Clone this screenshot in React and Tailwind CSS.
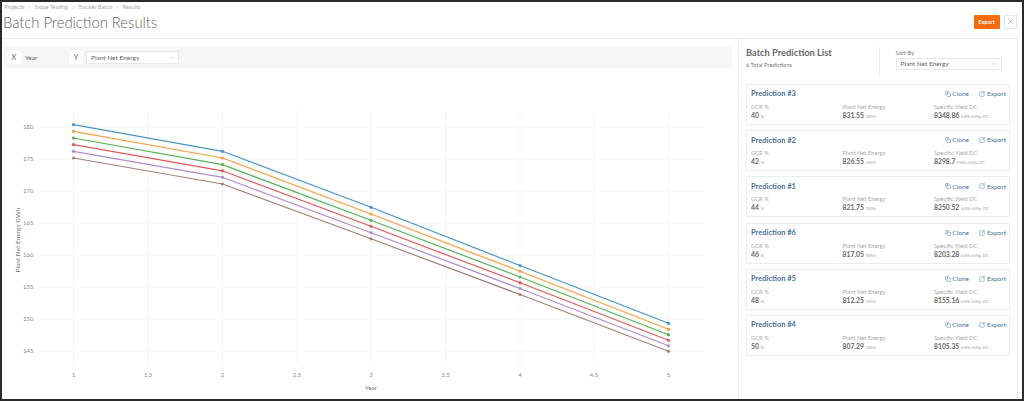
import { ChevronDown, ChevronRight, Copy, SquareArrowOutUpRight, X } from "lucide-react";

const predictions = [
  { name: "Prediction #3", gcr: "40", energy: "831.55", yieldDc: "8348.86" },
  { name: "Prediction #2", gcr: "42", energy: "826.55", yieldDc: "8298.7" },
  { name: "Prediction #1", gcr: "44", energy: "821.75", yieldDc: "8250.52" },
  { name: "Prediction #6", gcr: "46", energy: "817.05", yieldDc: "8203.28" },
  { name: "Prediction #5", gcr: "48", energy: "812.25", yieldDc: "8155.16" },
  { name: "Prediction #4", gcr: "50", energy: "807.29", yieldDc: "8105.35" },
];

const xPos = [73.5, 222.5, 371, 520, 668.5];
const series = [
  { color: "#4a93c6", y: [124.7, 151.3, 207.3, 265.5, 323.3] },
  { color: "#fb9d45", y: [131.3, 158, 214, 271.3, 329.3] },
  { color: "#58b358", y: [138, 164.7, 220.3, 277, 334.7] },
  { color: "#e05a5b", y: [144.7, 170.8, 226.3, 282.7, 340.3] },
  { color: "#b08cd0", y: [151.3, 177.3, 232.7, 288.5, 345.8] },
  { color: "#a98078", y: [158, 184, 238.8, 294.5, 351.3] },
];
const xTicks = [
  ["1", 73.5], ["1.5", 148], ["2", 222.5], ["2.5", 297], ["3", 371],
  ["3.5", 445.5], ["4", 520], ["4.5", 594], ["5", 668.5],
];
const yTicks = [["180", 127], ["175", 159], ["170", 191], ["165", 223], ["160", 255], ["155", 287], ["150", 319], ["145", 351]];

// svg coordinates are page coordinates shifted by the chart's top-left corner
const OX = 2;
const OY = 68;

function Chart() {
  return (
    <svg width="736" height="331" viewBox={`${OX} ${OY} 736 331`} className="block">
      {xTicks.map(([label, x]) => (
        <g key={label}>
          <line x1={x} x2={x} y1="110" y2="366" stroke="#f3f3f3" strokeWidth="0.8" />
          <text x={x} y="377" textAnchor="middle" fontSize="6" fill="#8a8a8a">{label}</text>
        </g>
      ))}
      {yTicks.map(([label, y]) => (
        <g key={label}>
          <line x1="39" x2="704" y1={y} y2={y} stroke="#f3f3f3" strokeWidth="0.8" />
          <text x="33.5" y={y + 2} textAnchor="end" fontSize="6" fill="#8a8a8a">{label}</text>
        </g>
      ))}
      {series.map((s) => (
        <g key={s.color}>
          <polyline
            points={s.y.map((y, i) => `${xPos[i]},${y}`).join(" ")}
            fill="none"
            stroke={s.color}
            strokeWidth="1.2"
          />
          {s.y.map((y, i) => (
            <circle key={i} cx={xPos[i]} cy={y} r="1.6" fill={s.color} />
          ))}
        </g>
      ))}
      <text x="20" y="240" textAnchor="middle" fontSize="6.5" fill="#777" transform="rotate(-90 20 240)">Plant Net Energy GWh</text>
      <text x="371" y="390" textAnchor="middle" fontSize="6.5" fill="#777">Year</text>
    </svg>
  );
}

function Stat({ label, value, unit }) {
  return (
    <div className="w-[91.5px] shrink-0">
      <div className="text-[5.8px] leading-[8px] text-[#a8a8a8]">{label}</div>
      <div className="text-[6.8px] leading-[9px] font-bold text-[#666] whitespace-nowrap">
        {value} <span className="text-[4.5px] font-normal text-[#aaa]">{unit}</span>
      </div>
    </div>
  );
}

function PredictionCard({ item }) {
  return (
    <div className="h-[41px] border border-[#e8edf2] rounded-[1px] pl-[4px] pr-[3px] pt-[4.5px]">
      <div className="flex items-center justify-between h-[9px]">
        <span className="text-[7.5px] font-bold text-[#4a7299]">{item.name}</span>
        <div className="flex items-center gap-[10.5px] text-[6.5px] text-[#4a7299]">
          <span className="flex items-center gap-[1.5px]"><Copy size={6} strokeWidth={1.8} />Clone</span>
          <span className="flex items-center gap-[1.5px]"><SquareArrowOutUpRight size={6} strokeWidth={1.8} />Export</span>
        </div>
      </div>
      <div className="flex mt-[4.5px]">
        <Stat label="GCR %" value={item.gcr} unit="%" />
        <Stat label="Plant Net Energy" value={item.energy} unit="GWh" />
        <Stat label="Specific Yield DC" value={item.yieldDc} unit="kWh/kWp DC" />
      </div>
    </div>
  );
}

export default function App() {
  return (
    <div className="w-[1024px] h-[401px] overflow-hidden bg-white border-2 border-[#2a2a2a] font-['Lato','Open_Sans',sans-serif] text-[#555] flex flex-col">
      {/* header */}
      <div className="h-[36px] shrink-0 flex justify-between pl-[1px] pr-[5px]">
        <div>
          <div className="flex items-center gap-[2.5px] h-[10px] mt-[0.5px] pl-[1px] text-[5.8px] text-[#aaa]">
            <span>Projects</span><ChevronRight size={5} />
            <span>Slope Testing</span><ChevronRight size={5} />
            <span>Tracker Batch</span><ChevronRight size={5} />
            <span>Results</span>
          </div>
          <h1 className="text-[14.8px] leading-[19px] font-light text-[#5f5f5f]">Batch Prediction Results</h1>
        </div>
        <div className="flex items-start gap-[4px] pt-[13px]">
          <button className="w-[26px] h-[13.5px] bg-[#f56b0d] text-white text-[5.5px] font-bold rounded-[1px]">Export</button>
          <button className="w-[13.5px] h-[13.5px] border border-[#e3e8ee] flex items-center justify-center text-[#777]"><X size={9} strokeWidth={1} /></button>
        </div>
      </div>

      {/* body */}
      <div className="flex-1 min-h-0 flex justify-between mr-[4px] border-t border-[#e8e8e8]">
        <div className="w-[736px] shrink-0">
          <div className="h-[21px] mt-[8px] ml-[2px] mr-[6px] bg-[#f6f6f6] flex items-center px-[3px] text-[6.5px] text-[#666]">
            <span className="w-[14px] h-[13px] bg-white flex items-center justify-center text-[7.5px]">X</span>
            <span className="w-[48px] pl-[4px]">Year</span>
            <span className="w-[14px] h-[13px] bg-white flex items-center justify-center text-[7.5px]">Y</span>
            <div className="ml-[3px] w-[93px] h-[13px] bg-white border border-[#e8e8e8] flex items-center justify-between pl-[4px] pr-[3px]">
              <span>Plant Net Energy</span>
              <ChevronDown size={6} className="text-[#aaa]" />
            </div>
          </div>
          <Chart />
        </div>

        <div className="w-[280px] shrink-0 border-l border-r border-[#e8edf2] px-[7px]">
          <div className="flex h-[29px] mt-[8px] mb-[8px]">
            <div className="w-[134px] border-r border-[#eeeeee] h-[29px]">
              <h2 className="text-[9.3px] leading-[12px] font-bold text-[#666]">Batch Prediction List</h2>
              <p className="text-[5.7px] leading-[8px] mt-[2px] text-[#777]">6 Total Predictions</p>
            </div>
            <div className="ml-[15.5px]">
              <div className="text-[5.8px] leading-[8px] mt-[2px] text-[#777]">Sort By</div>
              <div className="w-[106px] h-[12px] mt-[1px] border border-[#e8e8e8] flex items-center justify-between px-[4px] text-[6.5px] text-[#666]">
                <span>Plant Net Energy</span>
                <ChevronDown size={6} className="text-[#aaa]" />
              </div>
            </div>
          </div>
          <div className="flex flex-col gap-[5.2px]">
            {predictions.map((p) => (
              <PredictionCard key={p.name} item={p} />
            ))}
          </div>
        </div>
      </div>
    </div>
  );
}
